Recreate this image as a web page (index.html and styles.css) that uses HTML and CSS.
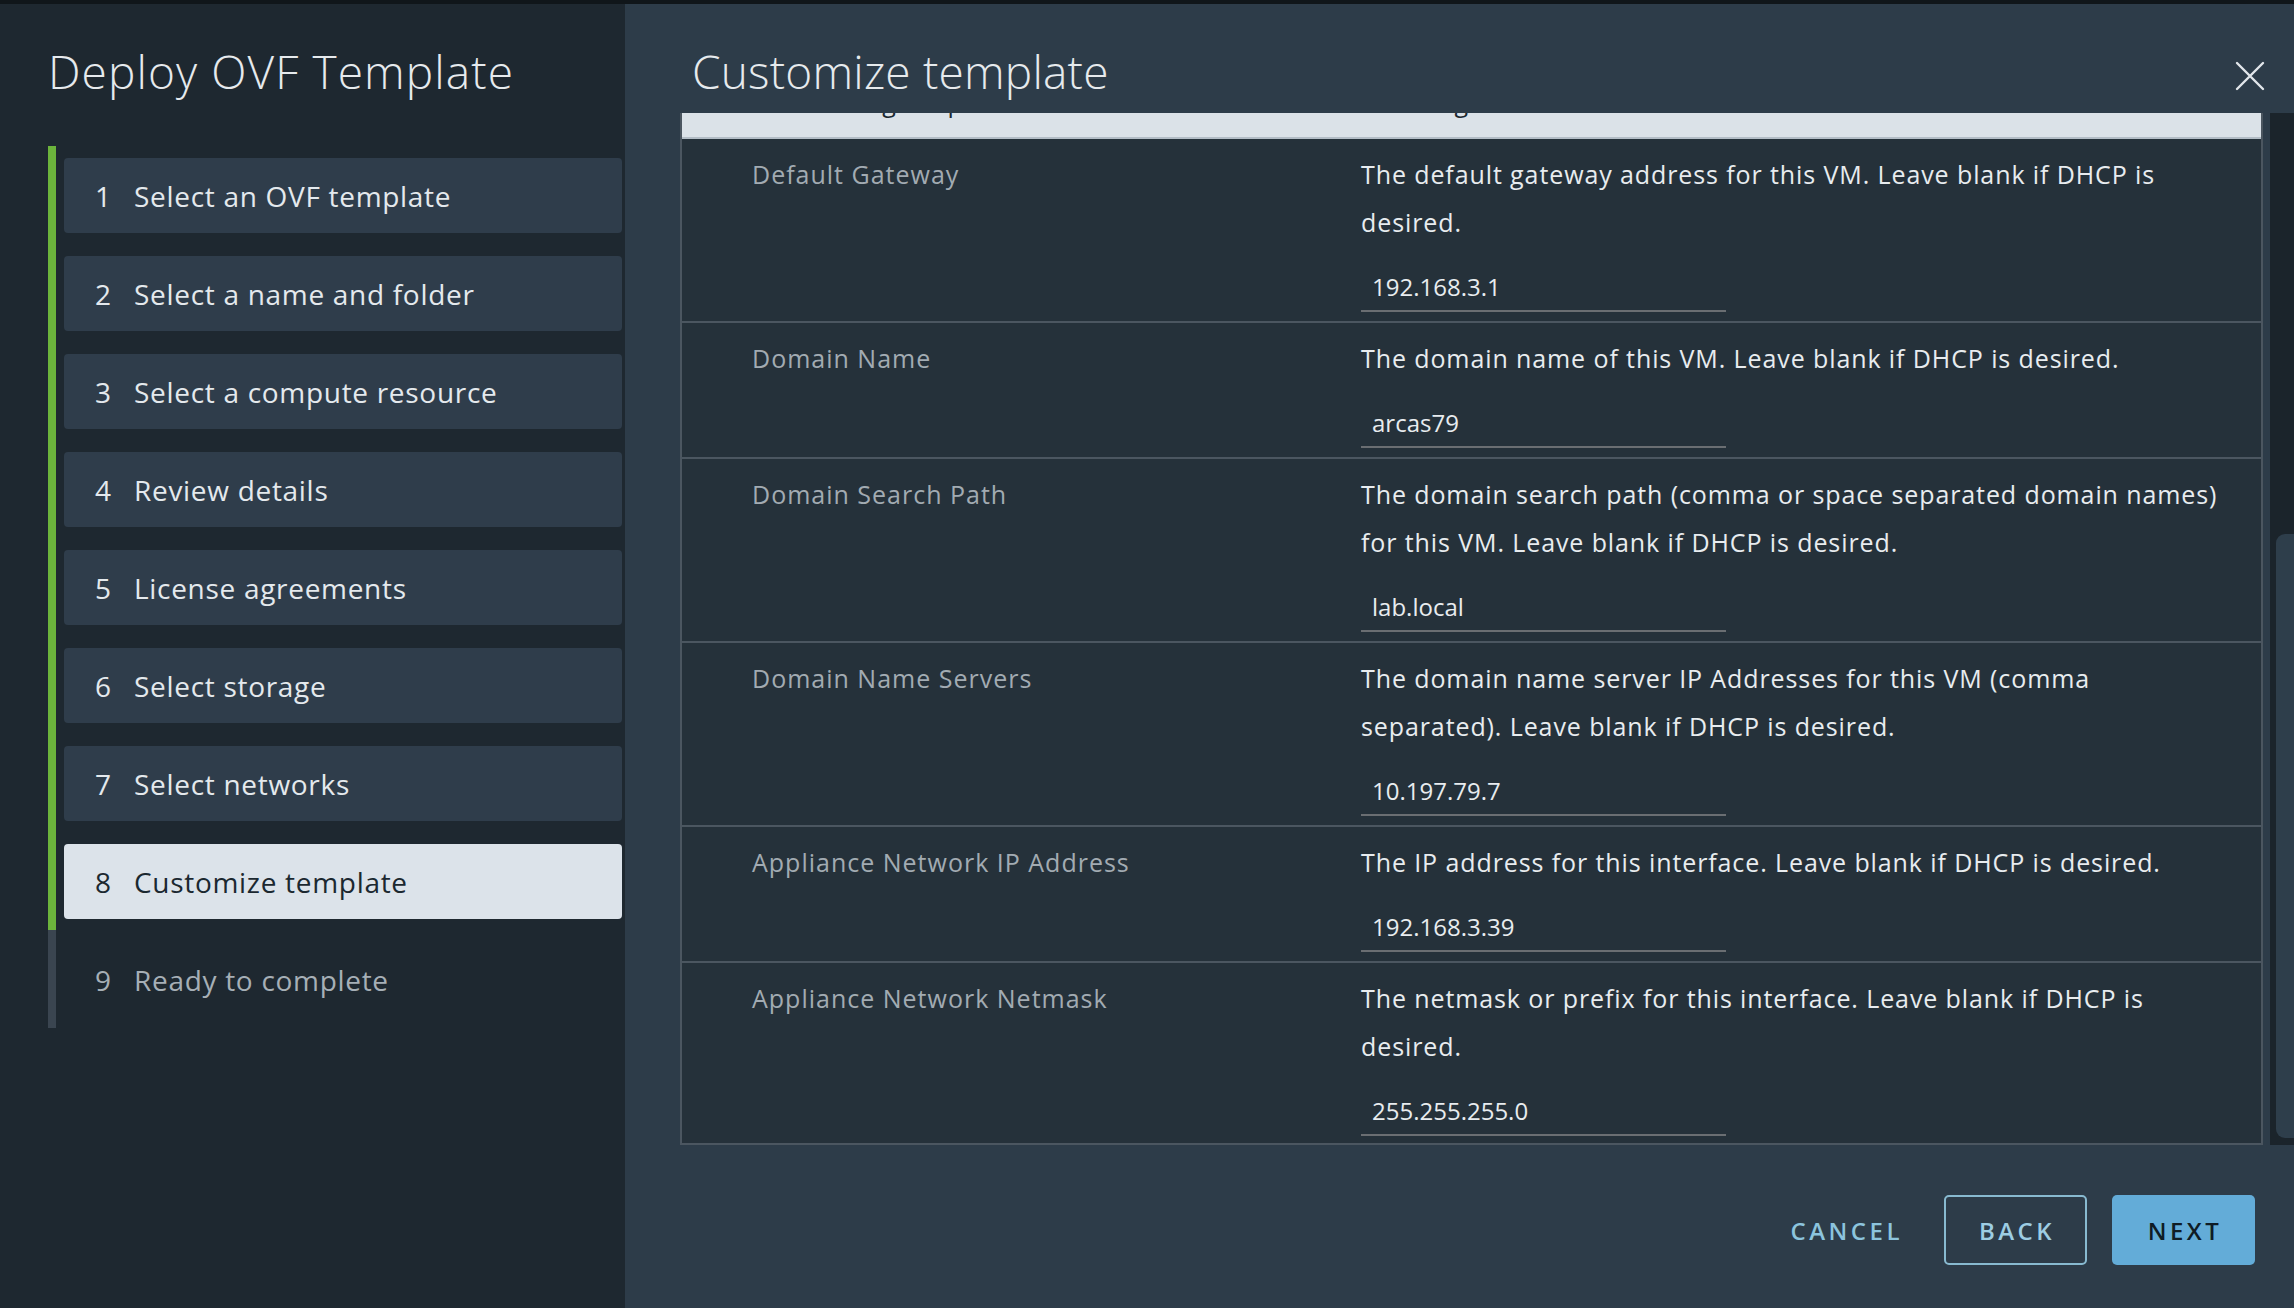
FILE: index.html
```html
<!DOCTYPE html>
<html lang="en">
<head>
<meta charset="utf-8">
<title>Deploy OVF Template</title>
<link rel="stylesheet" href="styles.css">
</head>
<body>
<div class="modal">
  <aside class="sidebar">
    <h1 class="title">Deploy OVF Template</h1>
    <ol class="steps">
      <li class="step done"><div class="box"><span class="num">1</span><span class="lbl">Select an OVF template</span></div></li>
      <li class="step done"><div class="box"><span class="num">2</span><span class="lbl">Select a name and folder</span></div></li>
      <li class="step done"><div class="box"><span class="num">3</span><span class="lbl">Select a compute resource</span></div></li>
      <li class="step done"><div class="box"><span class="num">4</span><span class="lbl">Review details</span></div></li>
      <li class="step done"><div class="box"><span class="num">5</span><span class="lbl">License agreements</span></div></li>
      <li class="step done"><div class="box"><span class="num">6</span><span class="lbl">Select storage</span></div></li>
      <li class="step done"><div class="box"><span class="num">7</span><span class="lbl">Select networks</span></div></li>
      <li class="step done"><div class="box active"><span class="num">8</span><span class="lbl">Customize template</span></div></li>
      <li class="step todo"><div class="box plain"><span class="num">9</span><span class="lbl">Ready to complete</span></div></li>
    </ol>
  </aside>
  <section class="main">
    <header class="head">
      <h2 class="title">Customize template</h2>
      <button class="close" aria-label="Close">
        <svg width="30" height="30" viewBox="0 0 30 30"><path d="M2 2 L28 28 M28 2 L2 28" stroke="#e2e7eb" stroke-width="2.4" stroke-linecap="round" fill="none"/></svg>
      </button>
    </header>
    <div class="scroll">
      <div class="table">
        <div class="hdr-clip">
          <div class="row hdr">
            <div class="label">Networking Properties</div>
            <div class="desc"><p>6 settings</p></div>
          </div>
        </div>
        <div class="row">
          <div class="label">Default Gateway</div>
          <div class="desc"><p>The default gateway address for this VM. Leave blank if DHCP is desired.</p><div class="input">192.168.3.1</div></div>
        </div>
        <div class="row">
          <div class="label">Domain Name</div>
          <div class="desc"><p>The domain name of this VM. Leave blank if DHCP is desired.</p><div class="input">arcas79</div></div>
        </div>
        <div class="row">
          <div class="label">Domain Search Path</div>
          <div class="desc"><p>The domain search path (comma or space separated domain names) for this VM. Leave blank if DHCP is desired.</p><div class="input">lab.local</div></div>
        </div>
        <div class="row">
          <div class="label">Domain Name Servers</div>
          <div class="desc"><p>The domain name server IP Addresses for this VM (comma separated). Leave blank if DHCP is desired.</p><div class="input">10.197.79.7</div></div>
        </div>
        <div class="row">
          <div class="label">Appliance Network IP Address</div>
          <div class="desc"><p>The IP address for this interface. Leave blank if DHCP is desired.</p><div class="input">192.168.3.39</div></div>
        </div>
        <div class="row">
          <div class="label">Appliance Network Netmask</div>
          <div class="desc"><p>The netmask or prefix for this interface. Leave blank if DHCP is desired.</p><div class="input">255.255.255.0</div></div>
        </div>
      </div>
      <div class="track"><div class="thumb"></div></div>
    </div>
    <footer class="foot">
      <button class="btn link">CANCEL</button>
      <button class="btn outline">BACK</button>
      <button class="btn primary">NEXT</button>
    </footer>
  </section>
</div>
</body>
</html>
```
FILE: styles.css
```css
* { box-sizing: border-box; }
html, body { margin: 0; padding: 0; }
body {
  width: 2294px;
  height: 1308px;
  overflow: hidden;
  background: #0f1418;
  font-family: "Open Sans", "Noto Sans", sans-serif;
}
.modal {
  display: flex;
  height: 1308px;
  border-top: 4px solid #10161a;
}
.sidebar {
  width: 625px;
  flex: none;
  background: #1e2830;
  padding: 39px 3px 0 48px;
}
.title {
  margin: 0;
  font-weight: 300;
  font-size: 46px;
  line-height: 56px;
  color: #e6eaed;
  letter-spacing: 0.2px;
}
.sidebar .title { letter-spacing: 1.1px; }
.steps {
  list-style: none;
  margin: 47px 0 0 0;
  padding: 0;
}
.step {
  border-left: 8px solid #6cb43c;
  padding: 12px 0 11px 8px;
}
.step.todo { border-left-color: #3a4550; }
.box {
  height: 75px;
  display: flex;
  align-items: center;
  padding-left: 31px;
  background: #2f3d4b;
  border-radius: 4px;
  color: #e4e9ed;
  font-size: 28px;
}
.lbl { letter-spacing: 0.7px; }
.box.active { background: #dce3ea; color: #1b2830; }
.box.plain { background: transparent; color: #a6afb6; }
.num { width: 39px; flex: none; }

.main {
  flex: 1;
  display: flex;
  flex-direction: column;
  background: #2d3c49;
  min-width: 0;
}
.head {
  height: 109px;
  display: flex;
  align-items: flex-start;
  justify-content: space-between;
  padding: 39px 29px 0 67px;
  flex: none;
}
.close {
  margin-top: 18px;
  background: none;
  border: 0;
  padding: 0;
  width: 30px;
  height: 30px;
  cursor: pointer;
}
.close svg { display: block; }
.scroll {
  height: 1032px;
  flex: none;
  display: flex;
  padding-left: 55px;
}
.table {
  width: 1583px;
  background: #25313a;
  border: 2px solid #4b5660;
  border-top: 0;
  overflow: hidden;
}
.track {
  width: 24px;
  margin-left: 7px;
  background: #1b242b;
  display: flex;
  flex-direction: column;
  justify-content: flex-end;
  padding: 0 0 7px 6px;
}
.thumb {
  height: 604px;
  background: #2e3e4b;
  border-radius: 9px 0 0 9px;
}
.row {
  display: grid;
  grid-template-columns: 679px 870px;
  padding: 11px 0 9px 0;
  border-bottom: 2px solid #4b5660;
  font-size: 25px;
}
.label {
  padding-left: 70px;
  line-height: 48px;
  color: #a2abb2;
  letter-spacing: 1px;
}
.desc p {
  margin: 0;
  line-height: 48px;
  color: #e8ecef;
  letter-spacing: 0.9px;
}
.input {
  margin-top: 18px;
  width: 365px;
  height: 48px;
  line-height: 46px;
  padding-left: 11px;
  border-bottom: 2px solid #6a6e72;
  color: #e8ecef;
  font-size: 24px;
}
.hdr-clip {
  height: 26px;
  overflow: hidden;
  display: flex;
  flex-direction: column;
  justify-content: flex-end;
  background: #dbe2e8;
  border-bottom: 2px solid #b3bdc6;
}
.hdr-clip .row {
  flex: none;
  border-bottom: 0;
  padding-bottom: 0;
  height: 70px;
}
.hdr .label, .hdr .desc p { color: #1b2830; }

.foot {
  flex: 1;
  display: flex;
  justify-content: flex-end;
  align-items: flex-start;
  padding: 50px 39px 0 0;
  gap: 25px;
}
.btn {
  height: 70px;
  width: 143px;
  border-radius: 5px;
  font-family: "Open Sans", "Noto Sans", sans-serif;
  font-size: 24px;
  font-weight: 600;
  letter-spacing: 3.5px;
  padding: 0 0 0 3px;
  cursor: pointer;
}
.btn.link {
  background: transparent;
  border: 0;
  color: #8cc4dd;
  width: auto;
  padding: 0 16px;
}
.btn.outline {
  background: transparent;
  border: 2px solid #88bad0;
  color: #9dcde3;
}
.btn.primary {
  background: #63acd8;
  border: 0;
  color: #0f1c25;
}
```
